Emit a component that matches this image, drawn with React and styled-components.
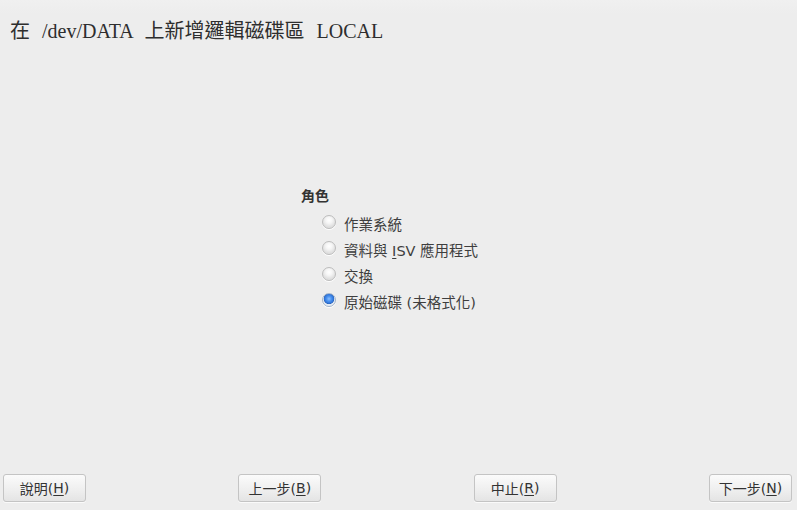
import React from 'react';
import styled, { createGlobalStyle } from 'styled-components';

const GlobalStyle = createGlobalStyle`
  html, body {
    margin: 0;
    padding: 0;
    background: #ededed;
  }
  #root {
    width: 797px;
    height: 510px;
  }
`;

const Page = styled.div`
  width: 797px;
  height: 510px;
  display: flex;
  flex-direction: column;
  background: linear-gradient(to bottom, #f0f0f0 0px, #ededed 14px, #ededed 100%);
  font-family: "DejaVu Sans", "Noto Sans CJK TC", sans-serif;
  color: #3a3a3a;
  box-sizing: border-box;
`;

const Title = styled.h1`
  margin: 0;
  padding: 18px 0 0 10px;
  height: 40px;
  box-sizing: border-box;
  font-family: "Liberation Serif", "Noto Sans CJK TC", serif;
  font-weight: normal;
  font-size: 20px;
  line-height: 26px;
  color: #2e2e2e;
  white-space: pre;
  word-spacing: 1px;
`;

const Content = styled.div`
  flex: 1;
  padding: 146px 0 0 301px;
`;

const Group = styled.div`
  display: flex;
  flex-direction: column;
`;

const GroupLabel = styled.div`
  font-size: 14px;
  font-weight: bold;
  line-height: 20px;
  color: #333;
  margin-bottom: 4px;
`;

const Option = styled.label`
  display: flex;
  align-items: center;
  gap: 8px;
  height: 26px;
  padding-left: 21px;
  font-size: 14.5px;
  color: #3e3e3e;
`;

const Radio = styled.span`
  width: 14px;
  height: 14px;
  border-radius: 50%;
  box-sizing: border-box;
  border: 1px solid ${p => (p.$checked ? '#a3b5cb' : '#bdbdbd')};
  background: ${p =>
    p.$checked
      ? 'radial-gradient(circle at 50% 40%, #8cc0ff 0, #4c93f0 2.5px, #2f74d8 4.5px, #2c64b8 5px, #e4eaf2 5.6px, #f3f5f8 100%)'
      : 'radial-gradient(circle at 50% 35%, #ffffff 0, #f6f6f6 3px, #e0e0e0 6.5px)'};
  box-shadow: 0 1px 0 rgba(255, 255, 255, 0.9);
  margin-top: -2px;
`;

const Mn = styled.span`
  text-decoration: underline;
  text-underline-offset: 2px;
`;

const Footer = styled.div`
  display: flex;
  justify-content: space-between;
  padding: 0 5px 8px 3px;
`;

const Button = styled.button`
  width: 83px;
  height: 28px;
  border: 1px solid #c4c4c4;
  border-radius: 3px;
  background: linear-gradient(to bottom, #fbfbfb 0%, #eeeeee 60%, #e4e4e4 100%);
  box-shadow: 0 1px 0 rgba(255, 255, 255, 0.7);
  font-family: "DejaVu Sans", "Noto Sans CJK TC", sans-serif;
  font-size: 14px;
  color: #333;
  padding: 0;
  display: flex;
  align-items: center;
  justify-content: center;
`;

const roles = [
  { key: 'os', label: '作業系統' },
  { key: 'isv', label: <>資料與 <Mn>I</Mn>SV 應用程式</> },
  { key: 'swap', label: '交換' },
  { key: 'raw', label: '原始磁碟 (未格式化)', checked: true },
];

export default function App() {
  return (
    <>
      <GlobalStyle />
      <Page>
        <Title>{'在  /dev/DATA  上新增邏輯磁碟區  LOCAL'}</Title>
        <Content>
          <Group>
            <GroupLabel>角色</GroupLabel>
            {roles.map(r => (
              <Option key={r.key}>
                <Radio $checked={r.checked} />
                <span>{r.label}</span>
              </Option>
            ))}
          </Group>
        </Content>
        <Footer>
          <Button>說明(<Mn>H</Mn>)</Button>
          <Button>上一步(<Mn>B</Mn>)</Button>
          <Button>中止(<Mn>R</Mn>)</Button>
          <Button>下一步(<Mn>N</Mn>)</Button>
        </Footer>
      </Page>
    </>
  );
}
